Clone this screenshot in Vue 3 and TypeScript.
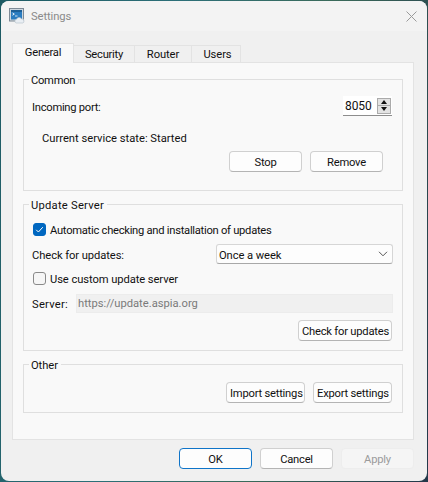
<script setup lang="ts">
const tabs: string[] = ['General', 'Security', 'Router', 'Users']
</script>

<template>
  <div class="desktop">
    <div class="window">
      <header class="titlebar">
        <svg class="app-icon" width="16" height="16" viewBox="0 0 16 16">
          <rect x="0.5" y="0.5" width="14" height="12.5" fill="#cdd6de" stroke="#7d8a96" />
          <rect x="2" y="2" width="11" height="9.5" fill="#2a7cc0" />
          <rect x="2" y="2" width="11" height="2" fill="#1d5f96" />
          <path d="M3.5 5l1.8 1.1-1.8 1.1" fill="none" stroke="#fff" stroke-width="0.9" />
          <path d="M6 8h2.5" stroke="#dcecf8" stroke-width="0.9" />
          <path d="M7 15a2 2 0 0 1 .6-3.8 2.6 2.6 0 0 1 4.8-.3 2.2 2.2 0 0 1 2.6 2.1 2 2 0 0 1-1 2z" fill="#e9eef3" stroke="#b4bfc9" stroke-width="0.6" />
        </svg>
        <span class="title">Settings</span>
        <svg class="close" width="11" height="11" viewBox="0 0 11 11">
          <path d="M.5.5l10 10M10.5.5l-10 10" stroke="#9a9a9a" stroke-width="1" fill="none" />
        </svg>
      </header>

      <main class="body">
        <nav class="tabs">
          <div v-for="(t, i) in tabs" :key="t" class="tab" :class="{ active: i === 0 }">{{ t }}</div>
        </nav>

        <section class="pane">
          <div class="group common">
            <span class="legend tight">Common</span>
            <div class="row port-row">
              <span class="label tight">Incoming port:</span>
              <div class="spin">
                <span class="label">8050</span>
                <div class="spin-btns">
                  <div class="spin-btn"><i class="arrow up"></i></div>
                  <div class="spin-btn"><i class="arrow down"></i></div>
                </div>
              </div>
            </div>
            <div class="state">Current service state: Started</div>
            <div class="actions service-actions">
              <button class="btn wide">Stop</button>
              <button class="btn wide">Remove</button>
            </div>
          </div>

          <div class="group update">
            <span class="legend loose">Update Server</span>
            <label class="check-row first">
              <span class="box checked">
                <svg width="13" height="13" viewBox="0 0 13 13"><path d="M3.2 6.8l2.2 2.2 4.4-4.8" fill="none" stroke="#fff" stroke-width="1" /></svg>
              </span>
              <span class="label tight">Automatic checking and installation of updates</span>
            </label>
            <div class="row freq-row">
              <span class="label">Check for updates:</span>
              <div class="combo">
                <span class="label">Once a week</span>
                <svg width="10" height="6" viewBox="0 0 10 6"><path d="M1 .8l4 4 4-4" fill="none" stroke="#555" stroke-width="1" /></svg>
              </div>
            </div>
            <label class="check-row second">
              <span class="box"></span>
              <span class="label">Use custom update server</span>
            </label>
            <div class="row server-row">
              <span class="label loose server-label">Server:</span>
              <div class="server-input">https://update.aspia.org</div>
            </div>
            <div class="actions check-actions">
              <button class="btn">Check for updates</button>
            </div>
          </div>

          <div class="group other">
            <span class="legend">Other</span>
            <div class="actions other-actions">
              <button class="btn">Import settings</button>
              <button class="btn">Export settings</button>
            </div>
          </div>
        </section>

        <footer class="footer">
          <button class="btn wide primary">OK</button>
          <button class="btn wide">Cancel</button>
          <button class="btn wide disabled">Apply</button>
        </footer>
      </main>
    </div>
  </div>
</template>

<style>
html, body { margin: 0; padding: 0; }
</style>

<style scoped>
.desktop {
  width: 428px;
  height: 482px;
  box-sizing: border-box;
  padding: 1px;
  background: linear-gradient(100deg, #1d5a63 0%, #2c6f78 35%, #3a6a5a 65%, #23384a 100%);
  font-family: Roboto, "Liberation Sans", sans-serif;
  font-size: 11.2px;
  letter-spacing: -0.08px;
  color: #111;
  overflow: hidden;
}
.tight { letter-spacing: -0.27px; }
.loose { letter-spacing: 0.25px; }
.window {
  height: 480px;
  border-radius: 8px;
  background: #f0f0f0;
  overflow: hidden;
  display: flex;
  flex-direction: column;
}
.titlebar {
  height: 30px;
  flex: none;
  background: #f3f3f3;
  display: flex;
  align-items: center;
  padding: 0 10px 0 8px;
}
.app-icon { flex: none; }
.title { margin-left: 6px; color: #8a8a8a; padding-top: 1px; }
.close { margin-left: auto; }
.body { flex: 1; padding: 12px 12px 0 11px; display: flex; flex-direction: column; }
.tabs { display: flex; align-items: flex-end; height: 19px; position: relative; z-index: 1; }
.tab {
  height: 17px;
  line-height: 17px;
  box-sizing: border-box;
  border: 1px solid #e3e3e3;
  border-left-width: 0;
  border-bottom: 0;
  background: #f0f0f0;
  white-space: nowrap;
  text-align: center;
}
.tab:nth-child(1) { width: 62px; letter-spacing: -0.25px; }
.tab:nth-child(2) { width: 61px; letter-spacing: -0.25px; }
.tab:nth-child(3) { width: 57px; }
.tab:nth-child(4) { width: 49px; padding-left: 3px; }
.tab.active {
  height: 20px;
  margin-bottom: -1px;
  line-height: 17px;
  background: #f9f9f9;
  border-left-width: 1px;
}
.pane {
  height: 378px;
  width: 402px;
  box-sizing: border-box;
  border: 1px solid #e3e3e3;
  background: #f9f9f9;
  padding: 16px 10px 0 10px;
  display: flex;
  flex-direction: column;
  gap: 13px;
}
.group {
  position: relative;
  box-sizing: border-box;
  width: 380px;
  border: 1px solid #dfdfdf;
  padding: 0 10px 0 8px;
}
.common { height: 112px; padding-top: 16px; }
.update { height: 147px; padding-top: 16px; }
.other { height: 49px; padding-top: 17px; }
.legend {
  position: absolute;
  top: -8px;
  left: 5px;
  padding: 0 3px 0 2px;
  line-height: 17px;
  background: #f9f9f9;
}
.label { padding-top: 2px; line-height: 15px; }
.row { display: flex; align-items: center; justify-content: space-between; }
.port-row { height: 20px; }
.spin {
  width: 49px;
  height: 20px;
  box-sizing: border-box;
  background: #fff;
  border-bottom: 1px solid #8d8d8d;
  display: flex;
  align-items: center;
  justify-content: space-between;
  padding: 0 1px 0 2px;
  font-size: 12px;
}
.spin-btns { display: flex; flex-direction: column; width: 14px; }
.spin-btn {
  height: 8px;
  box-sizing: border-box;
  border: 1px solid #ababab;
  background: #e3e3e3;
  display: flex;
  align-items: center;
  justify-content: center;
}
.spin-btn + .spin-btn { border-top: 0; }
.arrow { display: block; width: 0; height: 0; border-left: 3px solid transparent; border-right: 3px solid transparent; }
.arrow.up { border-bottom: 4px solid #111; }
.arrow.down { border-top: 4px solid #111; }
.state { margin: 14px 0 0 10px; line-height: 17px; letter-spacing: 0; }
.actions { display: flex; justify-content: flex-end; }
.service-actions { margin-top: 4px; gap: 8px; padding-right: 9px; }
.btn {
  font: inherit;
  letter-spacing: -0.22px;
  color: #111;
  height: 21px;
  box-sizing: border-box;
  padding: 1px 3px 0;
  background: #fdfdfd;
  border: 1px solid #d0d0d0;
  border-bottom-color: #b4b4b4;
  border-radius: 4px;
  white-space: nowrap;
}
.btn.wide { width: 73px; }
.check-row { display: flex; align-items: center; gap: 4px; margin-left: 1px; height: 17px; }
.check-row.second { margin-top: 6px; }
.box {
  flex: none;
  width: 13px;
  height: 13px;
  box-sizing: border-box;
  border: 1px solid #8a8a8a;
  border-radius: 3px;
  background: #f6f6f6;
  display: block;
}
.box.checked { background: #0067c0; border-color: #0067c0; }
.box.checked svg { display: block; margin: -1px; }
.freq-row { height: 20px; margin-top: 6px; margin-right: -1px; }
.combo {
  width: 177px;
  height: 20px;
  box-sizing: border-box;
  background: #fdfdfd;
  border: 1px solid #d6d6d6;
  border-bottom-color: #a8a8a8;
  border-radius: 3px;
  display: flex;
  align-items: center;
  justify-content: space-between;
  padding: 0 4px 0 2px;
}
.server-row { height: 19px; margin-top: 7px; margin-right: -1px; }
.server-label { width: 44px; flex: none; }
.server-input {
  flex: 1;
  height: 19px;
  line-height: 18px;
  box-sizing: border-box;
  border: 1px solid #ececec;
  background: #f0f0f0;
  color: #7a7a7a;
  padding-left: 1px;
  letter-spacing: 0;
}
.check-actions { margin-top: 7px; }
.check-actions .btn { width: 94px; }
.other-actions { gap: 8px; }
.other-actions .btn { width: 79px; }
.footer {
  width: 402px;
  display: flex;
  justify-content: flex-end;
  gap: 8px;
  margin-top: 8px;
}
.btn.primary { border: 1px solid #0f74c8; }
.btn.disabled { background: #f5f5f5; border-color: #ededed; color: #9b9b9b; }
</style>
